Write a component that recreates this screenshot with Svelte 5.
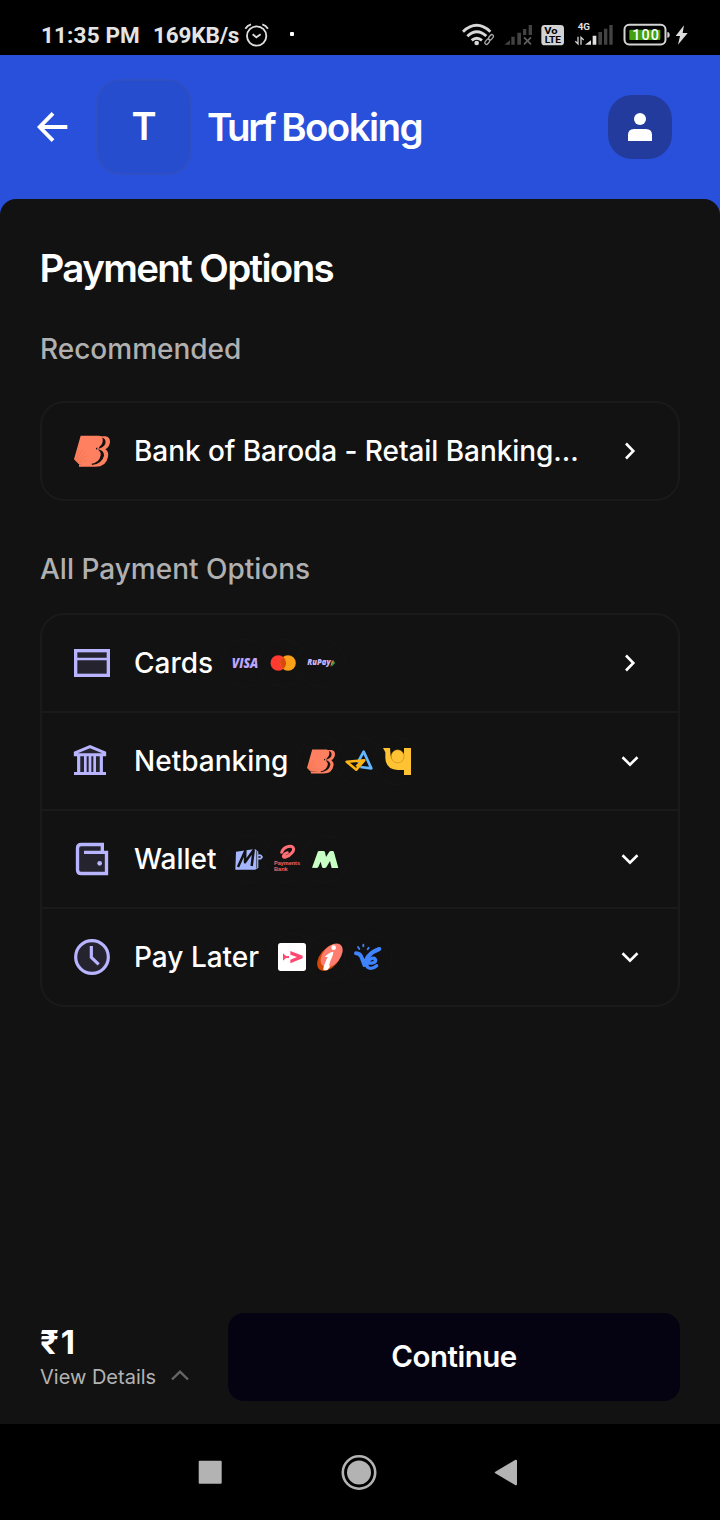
<script>
  const methods = [
    { id: 'cards', label: 'Cards', logos: ['visa', 'mastercard', 'rupay'], open: 'right' },
    { id: 'bank', label: 'Netbanking', logos: ['baroda', 'axis', 'pnb'], open: 'down' },
    { id: 'wallet', label: 'Wallet', logos: ['mobikwik', 'airtel', 'mpay'], open: 'down' },
    { id: 'clock', label: 'Pay Later', logos: ['lazy', 'icici', 've'], open: 'down' }
  ];
</script>

{#snippet chevron(dir)}
  <svg class="chevron" viewBox="0 0 32 32" width="32" height="32">
    {#if dir === 'right'}
      <path d="M12 8.5 L19.3 16 L12 23.5" />
    {:else}
      <path d="M8.5 12.3 L16 19.6 L23.5 12.3" />
    {/if}
  </svg>
{/snippet}

{#snippet baroda(w)}
  <svg viewBox="0 0 108 96" width={w} height={(w * 96) / 108}>
    <path fill="#ff8060" d="M78 4 H94 Q108 6 108 20 Q107 36 94 43 Q105 50 102 65 Q97 95 64 95 H15 V88 L60 84 Z" />
    <path fill="#121212" d="M82 7 Q98 11 94 26 Q90 38 70 42 Q91 46 90 62 Q85 85 54 90 L52 84 L74 45 Z" />
    <path fill="#ff8060" d="M20 2 H76 Q88 4 86 20 Q83 35 66 39 L66 43 Q82 47 80 61 Q76 84 50 87 H14 L0 73 Z" />
    <g stroke="#dd7040" stroke-width="1.3" fill="none">
      <path d="M5 77 L14 44 M7 79 L26 42 M9 81 L34 50 M11 83 L38 62 M12 85 L40 75" />
    </g>
  </svg>
{/snippet}

{#snippet methodIcon(id)}
  <svg class="method" viewBox="0 0 108 108" width="36" height="36">
    {#if id === 'cards'}
      <rect x="5" y="17" width="98" height="74" stroke-width="10" />
      <path d="M4 42 H104" stroke-width="8" />
    {:else if id === 'bank'}
      <path d="M14 36 H82 V90 H14 Z" stroke="none" />
      <path d="M4 35 V29 L48 11 L92 29 V35 Z" />
      <path d="M0 91.5 H96 M14 36 V90 M82 36 V90" stroke-width="9.5" />
      <path d="M34 36 V90 M48 36 V90 M62 36 V90" stroke-width="8" />
    {:else if id === 'wallet'}
      <path d="M30 34 H97.5 V97.5 H22 Q10.5 97.5 10.5 86 V22 Q10.5 10.5 22 10.5 H85 V34" stroke-width="10" />
      <circle cx="77" cy="67" r="7" fill="#b9b4ff" stroke="none" />
    {:else}
      <circle cx="54" cy="54" r="49" stroke-width="9.5" />
      <path d="M52 21 V55 L74 76" fill="none" stroke-width="9.5" />
    {/if}
  </svg>
{/snippet}

{#snippet brand(name)}
  {#if name === 'baroda'}
    {@render baroda(28)}
  {:else}
    <svg viewBox="0 0 84 84" width="28" height="28">
      {#if name === 'visa'}
        <text x="2" y="56" class="visa" textLength="80" lengthAdjust="spacingAndGlyphs">VISA</text>
      {:else if name === 'mastercard'}
        <circle cx="28" cy="42" r="23.5" fill="#ff3a30" />
        <circle cx="57" cy="42" r="23.5" fill="#f9a01b" />
        <path d="M42.5 23.5 A23.5 23.5 0 0 1 42.5 60.5 A23.5 23.5 0 0 1 42.5 23.5 Z" fill="#d9480f" />
      {:else if name === 'rupay'}
        <text x="1" y="49" class="rupay" textLength="70" lengthAdjust="spacingAndGlyphs">RuPay</text>
        <path d="M75 32 L80 42 L70 53 Z" fill="#f47b20" />
        <path d="M79 32 L84 42 L74 53 Z" fill="#2aa05a" />
      {:else if name === 'axis'}
        <path d="M38 47 L56 14 L79 64 L46 60" fill="none" stroke="#63b8ff" stroke-width="8" stroke-linejoin="round" />
        <path d="M5 44 L58 40 L34 68 Z M34 58 L52 42" fill="none" stroke="#fcb514" stroke-width="7.5" stroke-linejoin="round" />
      {:else if name === 'pnb'}
        <path fill="#ffc233" d="M0 3 H21 L23 26 A21 21 0 0 0 63 30 V3 H84 V84 H63 V69 H44 Q8 67 7 32 V16 Z" />
        <circle cx="44" cy="28" r="19.5" fill="#ffc233" stroke="#a97a16" stroke-width="1.3" />
      {:else if name === 'mobikwik'}
        <path fill="#a5b6ff" d="M3 20 L60 12 L70 20 V69 L60 74 H1 Z" />
        <path fill="none" stroke="#a5b6ff" stroke-width="5" d="M69 31 H77 L81 36 L77 41 H69" />
        <path fill="none" stroke="#121212" stroke-width="7.500" stroke-linejoin="round" d="M9 66 L31 17 L30 52 L56 15 L50 63" />
        <path fill="none" stroke="#121212" stroke-width="2" d="M65 18 V70" />
      {:else if name === 'airtel'}
        <path fill="none" stroke="#ff6f76" stroke-width="9" stroke-linecap="round" stroke-linejoin="round" d="M26 22 C31 6 52 0 60 7 C67 16 51 34 36 37 C27 38 31 26 43 23" />
        <text x="3" y="60" class="airtel" textLength="78" lengthAdjust="spacingAndGlyphs">Payments</text>
        <text x="3" y="79" class="airtel" textLength="41" lengthAdjust="spacingAndGlyphs">Bank</text>
      {:else if name === 'mpay'}
        <path fill="#c8ffc4" d="M3 68 L21 19 Q23 18 26 18 H37 Q41 18 42 22 L45 36 L55 20 Q56 18 60 18 H65 Q68 18 69 22 L82 69 H62 L57 48 L46 67 Q44 69 41 69 H37 Q34 69 33 66 L29 50 L22 66 Q20 69 16 69 Z" />
      {:else if name === 'lazy'}
        <rect width="84" height="84" rx="8" fill="#fff" />
        <path fill="#ff4772" d="M15 31 L27 42 L15 53 Z M25 39 H33 V45 H25 Z M37 24 L74 38 V46 L37 61 V50 L57 42 L37 35 Z" />
      {:else if name === 'icici'}
        <ellipse cx="40" cy="44" rx="28" ry="46" transform="rotate(40 40 44)" fill="#d64805" />
        <ellipse cx="47" cy="37" rx="26" ry="41" transform="rotate(40 47 37)" fill="#ff7d70" />
        <circle cx="53" cy="14" r="7" fill="#fff" />
        <path fill="#fff" d="M26 42 Q38 28 52 26 Q52 34 44 52 Q37 69 42 72 L34 81 Q20 84 22 76 Q24 66 35 42 Z" />
      {:else}
        <g fill="none" stroke="#3f83ff" stroke-linecap="round">
          <path stroke-width="12" d="M6 31 Q20 31 25 49 L33 70 Q34 33 76 18" />
          <path stroke-width="10" d="M40 60 Q64 63 65 51 Q62 42 49 48 Q34 58 40 72 Q52 82 68 68" />
          <path stroke-width="5.500" d="M12 12 L16 18 M28 5 V10 M44 14 L41 19" />
        </g>
      {/if}
    </svg>
  {/if}
{/snippet}

<div class="screen">
  <div class="status">
    <span class="time">11:35 PM</span>
    <span class="speed">169KB/s</span>
    <svg class="alarm" viewBox="732 66 76 76" width="25.3" height="25.3" fill="none" stroke="#dedede" stroke-width="5.5">
      <circle cx="770" cy="108" r="29" />
      <path d="M736 86 Q742 76 753 73 M804 86 Q798 76 787 73 M758 103 L769 112 L782 103" />
    </svg>
    <i class="dot"></i>
    <div class="sys">
      <svg viewBox="66 66 100 76" width="33.33" height="25.33">
        <g fill="none" stroke="#d8d8d8" stroke-width="8.5">
          <path d="M69 95 Q110 57 151 95" />
          <path d="M82 109 Q110 82 139 108" />
          <path d="M95 121 Q110 108 126 121" />
        </g>
        <circle cx="110" cy="129" r="7" fill="#d8d8d8" />
        <g fill="none" stroke="#000" stroke-width="18"><path d="M138 130 L159 106" /></g>
        <g fill="none" stroke="#a8a8a8" stroke-width="4">
          <rect x="-9" y="-5" width="18" height="10" rx="5" transform="translate(142 125) rotate(-50)" />
          <rect x="-9" y="-5" width="18" height="10" rx="5" transform="translate(153 112) rotate(-50)" />
        </g>
      </svg>
      <svg class="sim1" viewBox="190 66 86 76" width="28.67" height="25.33">
        <path fill="#434343" d="M191 134 L208 121 V134 Z M212 110 H222 V134 H212 Z M230 98 H241 V134 H230 Z M247 87 H257 V105 H247 Z M264 75 H274 V105 H264 Z" />
        <path fill="none" stroke="#606060" stroke-width="5" d="M250 112 L271 133 M271 112 L250 133" />
      </svg>
      <svg class="volte" viewBox="302 66 70 76" width="23.33" height="25.33">
        <rect x="303" y="75" width="68" height="61" rx="10" fill="#d2d2d2" />
        <text x="312" y="103" font-size="26" textLength="40" lengthAdjust="spacingAndGlyphs">Vo</text>
        <text x="313" y="130" font-size="28" textLength="49" lengthAdjust="spacingAndGlyphs">LTE</text>
      </svg>
      <svg class="sim2" viewBox="404 60 116 82" width="38.67" height="27.33">
        <text x="412" y="90" font-size="29" textLength="37" lengthAdjust="spacingAndGlyphs">4G</text>
        <path fill="none" stroke="#cfcfcf" stroke-width="4" d="M413 110 V132 L405 124 M422 134 V112 L430 120" />
        <path fill="#e0e0e0" d="M434 134 L452 121 V134 Z M457 107 H468 V134 H457 Z" />
        <path fill="#434343" d="M474 96 H485 V134 H474 Z M491 86 H501 V134 H491 Z M507 75 H517 V134 H507 Z" />
      </svg>
      <svg class="battery" viewBox="548 66 198 76" width="66" height="25.33">
        <rect x="552.5" y="74.5" width="123" height="59" rx="14" fill="none" stroke="#d4d4d4" stroke-width="6" />
        <rect x="567" y="89" width="93" height="31" rx="3" fill="#45a00f" />
        <path d="M681 96 Q688 96 688 105 Q688 113 681 113 Z" fill="#d4d4d4" />
        <text x="576" y="120" font-size="43" font-weight="500" fill="#fff" textLength="80">100</text>
        <path d="M731 76 L706 108 H719 L713 134 L742 99 H727 Z" fill="#dedede" />
      </svg>
    </div>
  </div>

  <header>
    <svg class="back" viewBox="0 0 96 96" width="32" height="32" fill="none" stroke="#fff" stroke-width="11.5">
      <path d="M94 48 H12 M51 7 L11 48 L51 89" />
    </svg>
    <div class="tile"><span>T</span></div>
    <h1><span class="first">Turf</span> Booking</h1>
    <div class="profile">
      <svg viewBox="0 0 32 32" width="32" height="32" fill="#fff">
        <circle cx="16" cy="8" r="6" />
        <path d="M4 30 V24 Q4 18 10 18 H22 Q28 18 28 24 V30 Z" />
      </svg>
    </div>
  </header>

  <main>
    <h2>Payment Options</h2>
    <h3 class="rec">Recommended</h3>
    <div class="card">
      <div class="row">
        <span class="slot">{@render baroda(36)}</span>
        <span class="label bank">Bank of Baroda - Retail Banking...</span>
        {@render chevron('right')}
      </div>
    </div>
    <h3 class="all">All Payment Options</h3>
    <div class="card">
      {#each methods as m}
        <div class="row">
          <span class="slot">{@render methodIcon(m.id)}</span>
          <span class="label">{m.label}</span>
          <div class="logos" class:tight={m.id === 'cards'}>
            {#each m.logos as l}
              <span class="logo">{@render brand(l)}</span>
            {/each}
          </div>
          {@render chevron(m.open)}
        </div>
      {/each}
    </div>
  </main>

  <footer>
    <div class="total">
      <strong>₹1</strong>
      <div class="details">
        <span>View Details</span>
        <svg viewBox="0 0 18 12" width="18" height="12" fill="none" stroke="#666" stroke-width="2.4"><path d="M1 9.5 L9 1.7 L17 9.5" /></svg>
      </div>
    </div>
    <button>Continue</button>
  </footer>

  <nav>
    <svg viewBox="0 0 24 24" width="24" height="24"><rect x="0.7" y="0.7" width="23" height="23" rx="1" /></svg>
    <svg class="home" viewBox="0 0 36 36" width="36" height="36">
      <circle cx="18" cy="18.5" r="16.2" fill="none" stroke="#b3b3b3" stroke-width="2.6" />
      <circle cx="18" cy="18.5" r="12" />
    </svg>
    <svg viewBox="0 0 24 28" width="24" height="28"><path d="M1.8 14.5 L22 2.7 V26.3 Z" stroke="#b3b3b3" stroke-width="2" stroke-linejoin="round" /></svg>
  </nav>
</div>

<style>
  :global(body) { background: #000; }
  .screen {
    width: 720px;
    height: 1520px;
    display: flex;
    flex-direction: column;
    background: #2850db;
    color: #fff;
    font-family: Inter, "Noto Sans", sans-serif;
    overflow: hidden;
  }
  svg { display: block; flex: none; overflow: visible; }
  h1, h2, h3 { margin: 0; white-space: nowrap; }

  .status {
    height: 55px;
    box-sizing: border-box;
    padding: 15px 31px 0 41px;
    display: flex;
    align-items: center;
    background: #000;
    color: #e4e4e4;
    font: 700 22.5px/38px Roboto, sans-serif;
    white-space: nowrap;
  }
  .time { width: 112px; letter-spacing: 0.15px; }
  .speed { width: 91px; letter-spacing: -0.15px; }
  .dot { width: 4px; height: 4px; margin: -2px 0 0 20.7px; background: #fff; border-radius: 1px; }
  .sys { display: flex; align-items: center; margin-left: auto; font-family: Roboto, sans-serif; font-weight: 700; }
  .sim1 { margin-left: 8px; }
  .volte { margin-left: 8.7px; }
  .sim2 { margin: -2px 0 0 10.7px; fill: #e0e0e0; }
  .battery { margin-left: 9.3px; }

  header {
    height: 144px;
    box-sizing: border-box;
    padding: 0 48px 0 36px;
    display: flex;
    align-items: center;
    flex: none;
  }
  .tile {
    width: 96px;
    height: 96px;
    box-sizing: border-box;
    margin: 0 15px 0 28px;
    border: 2px solid #304fc5;
    border-radius: 24px;
    background: #274dcf;
    display: grid;
    place-items: center;
    font-size: 38px;
    font-weight: 600;
  }
  .tile span { padding-bottom: 2px; }
  h1 { font-size: 38.5px; font-weight: 600; letter-spacing: -1.6px; line-height: 48px; word-spacing: -1px; }
  .first { letter-spacing: -2.5px; }
  .profile {
    width: 64px;
    height: 64px;
    margin-left: auto;
    border-radius: 24px;
    background: #233b9d;
    display: grid;
    place-items: center;
  }

  main {
    flex: 1;
    padding: 45px 40px 0;
    border-radius: 16px 16px 0 0;
    background: #121212;
  }
  h2 { margin-left: -0.5px; font-size: 38.5px; font-weight: 600; letter-spacing: -1.65px; line-height: 48px; }
  h3 { font-size: 28px; font-weight: 500; line-height: 40px; color: #b0b0b0; }
  .rec { margin: 37px 0 32px; }
  .all { margin: 48px 0 24px; }
  .card { border: 2px solid #1a1a1a; border-radius: 24px; }
  .row {
    height: 96px;
    padding: 0 32px;
    display: flex;
    align-items: center;
  }
  .row + .row { border-top: 2px solid #1a1a1a; }
  .slot { width: 36px; margin-right: 24px; flex: none; }
  .label { font-size: 28px; font-weight: 500; line-height: 40px; white-space: nowrap; }
  .bank { letter-spacing: -0.06px; }
  .chevron { margin-left: auto; fill: none; stroke: #fff; stroke-width: 2.6; }
  .method { fill: #25242e; stroke: #b9b4ff; stroke-width: 9; }
  .logos { display: flex; gap: 10px; margin-left: 18.6px; }
  .logos.tight { margin-left: 17.8px; }
  .logo { width: 28px; height: 28px; display: grid; place-items: center; border-radius: 50%; box-shadow: 0 0 0 9px #121212, 0 0 0 10px #161616; }
  .visa { font: italic 800 41px "Open Sans", sans-serif; fill: #bda6ff; }
  .rupay { font: italic 800 26px "Open Sans", sans-serif; fill: #c9b8ff; }
  .airtel { font: 700 18px "Liberation Sans", sans-serif; fill: #f0656b; }

  footer {
    height: 113px;
    box-sizing: border-box;
    padding: 2px 40px 23px;
    display: flex;
    justify-content: space-between;
    background: #121212;
  }
  .total strong { display: block; margin-top: 9px; font-size: 33px; line-height: 40px; font-weight: 700; letter-spacing: 2px; }
  .details { display: flex; align-items: center; gap: 15px; margin-top: 1px; font-size: 20px; line-height: 28px; white-space: nowrap; color: #b3b3b3; }
  .details svg { margin-top: -2px; }
  button {
    width: 452px;
    height: 88px;
    padding: 0 0 2px;
    border: 0;
    border-radius: 16px;
    background: #050311;
    color: #fff;
    font: 600 29.5px/40px Inter, sans-serif;
    letter-spacing: -0.5px;
  }
  nav {
    height: 96px;
    padding: 0 202px 0 198px;
    display: flex;
    align-items: center;
    justify-content: space-between;
    background: #000;
    fill: #b3b3b3;
  }
  .home { position: relative; left: 1.3px; }
</style>
